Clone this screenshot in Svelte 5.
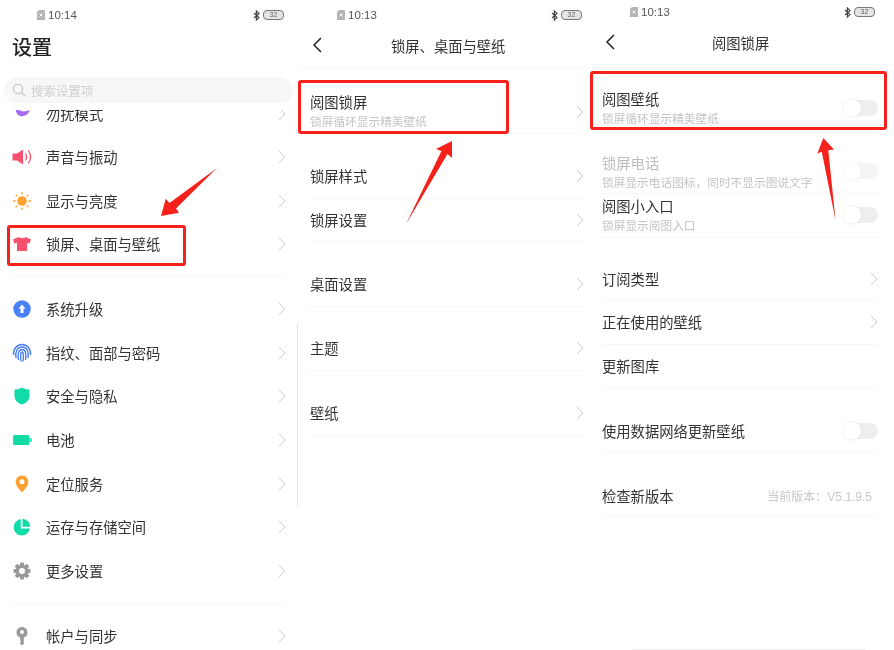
<script>
  const firstGroup = [
    { name: "声音与振动", icon: "sound" },
    { name: "显示与亮度", icon: "sun" },
    { name: "锁屏、桌面与壁纸", icon: "tee" },
  ];
  const secondGroup = [
    { name: "系统升级", icon: "up" },
    { name: "指纹、面部与密码", icon: "finger" },
    { name: "安全与隐私", icon: "shield" },
    { name: "电池", icon: "battery" },
    { name: "定位服务", icon: "pin" },
    { name: "运存与存储空间", icon: "pie" },
    { name: "更多设置", icon: "gear" },
  ];
  const gearTeeth = [0, 45, 90, 135];
</script>

{#snippet status(time)}
  <div class="status">
    <svg class="sim" width="8" height="10" viewBox="0 0 8 10">
      <path d="M2 0h6v10H0V2z" fill="#b4b4b4" />
      <path d="M2.5 3.5l3 3M5.5 3.5l-3 3" stroke="#fff" stroke-width="0.9" />
    </svg>
    <span class="time">{time}</span>
    <span class="grow"></span>
    <svg class="bt" width="7" height="11" viewBox="0 0 7 11">
      <path d="M1 3l5 4.6L3.4 10V1L6 3.4 1 8" fill="none" stroke="#444" stroke-width="1.2" />
    </svg>
    <span class="batt"><span>32</span></span>
  </div>
{/snippet}

{#snippet chevron()}
  <svg class="chev" width="8" height="14" viewBox="0 0 8 14">
    <path d="M1 1l6 6-6 6" fill="none" stroke="#cfcfcf" stroke-width="1" />
  </svg>
{/snippet}

{#snippet back()}
  <svg width="10" height="16" viewBox="0 0 10 16">
    <path d="M9 1L2 8l7 7" fill="none" stroke="#222" stroke-width="1.5" />
  </svg>
{/snippet}

{#snippet toggle()}
  <span class="toggle"><span class="knob"></span></span>
{/snippet}

{#snippet icon(kind)}
  <svg class="icon" width="20" height="20" viewBox="0 0 20 20">
    {#if kind === "moon"}
      <path d="M3 1c2 6 8 8 15 5-2 5-6 7-10 6C5 11 3 7 3 1z" fill="#a96bf0" />
    {:else if kind === "sound"}
      <path d="M.5 6.500H5l6-4v15l-6-4H.5z" fill="#f9506e" />
      <path d="M13.500 6.500c1.300 2.300 1.300 4.700 0 7M16.300 3.500c2.800 4 2.800 9 0 13" fill="none" stroke="#f9506e" stroke-width="1.300" />
    {:else if kind === "sun"}
      <circle cx="10" cy="10" r="4.800" fill="#ffa42e" />
      <path d="M10 1v2.500M10 16.500V19M1 10h2.500M16.500 10H19M3.600 3.600l1.800 1.800M14.600 14.600l1.800 1.800M3.600 16.400l1.800-1.800M14.600 5.400l1.800-1.800" stroke="#ffa42e" stroke-width="1.300" />
    {:else if kind === "tee"}
      <path d="M6.500 3c1 1.500 6 1.500 7 0l5.500 2.500-1.500 4-2.500-.8V17H5V8.700l-2.500.8L1 5.500z" fill="#f9506e" />
    {:else if kind === "up"}
      <circle cx="10" cy="10" r="8.700" fill="#4a80f5" />
      <path d="M10 5.500l3.500 4h-2V14h-3V9.500h-2z" fill="#fff" />
    {:else if kind === "finger"}
      <g fill="none" stroke="#4a80f5" stroke-width="1.400">
        <path d="M1.500 12C1 6 5 1.500 10 1.500S19 6 18.500 12" />
        <path d="M4 15c-1-6 1-11 6-11s7 5 6 11" />
        <path d="M6.500 17c-1-5-.5-10.500 3.500-10.500s4.500 5.500 3.500 10.500" />
        <path d="M9 18.500c-.5-3-1-9.500 1-9.500s1.500 6.500 1 9.500" />
      </g>
    {:else if kind === "shield"}
      <path d="M10 1.500c2.500 1.500 5 2 7.500 2V10c0 4.500-3.500 7.300-7.500 8.500C6 17.300 2.500 14.500 2.500 10V3.500c2.500 0 5-.5 7.500-2z" fill="#12dba8" />
    {:else if kind === "battery"}
      <rect x="1" y="5" width="16.500" height="10" rx="1.500" fill="#12dba8" />
      <rect x="18" y="8" width="1.500" height="4" fill="#12dba8" />
    {:else if kind === "pin"}
      <path d="M10 1.500c3.600 0 6.300 2.800 6.300 6.300 0 3.800-3.500 7.700-6.300 10.700C7.200 15.500 3.700 11.600 3.700 7.800c0-3.500 2.700-6.300 6.300-6.300z" fill="#ffa02e" />
      <circle cx="10" cy="7.800" r="2.500" fill="#fff" />
    {:else if kind === "pie"}
      <path d="M8.800 2.200v9.300h9c-.5 4-4 7-8.100 7C5 18.500 1.800 14.800 1.800 10.300c0-4.200 3-7.700 7-8.100z" fill="#12dba8" />
      <path d="M10.500 1.700c4 .2 7.400 3.400 7.700 8.100h-7.700z" fill="#12dba8" />
    {:else if kind === "gear"}
      <g fill="#999">
        {#each gearTeeth as deg}
          <rect x="8" y="1.500" width="4" height="17" rx="0.800" transform="rotate({deg} 10 10)" />
        {/each}
      </g>
      <circle cx="10" cy="10" r="6.300" fill="#999" />
      <circle cx="10" cy="10" r="3" fill="#fff" />
    {:else if kind === "key"}
      <path d="M10 1c3 0 5.500 2.400 5.500 5.400 0 2.400-1.500 4.300-3.700 5.100V18L10 19.200 8.200 18v-1.500l1-1-1-1v-3C6 10.700 4.500 8.800 4.500 6.400 4.500 3.400 7 1 10 1z" fill="#999" />
      <circle cx="10" cy="6" r="2" fill="#fff" />
    {/if}
  </svg>
{/snippet}

{#snippet menuRow(item)}
  <div class="menu-row">
    {@render icon(item.icon)}
    <span class="label">{item.name}</span>
    {@render chevron()}
  </div>
{/snippet}

<div class="page">
  <section class="phone one">
    {@render status("10:14")}
    <h1>设置</h1>
    <div class="search">
      <svg width="14" height="14" viewBox="0 0 14 14">
        <circle cx="6" cy="6" r="4.600" fill="none" stroke="#c8c8c8" stroke-width="1.300" />
        <path d="M9.500 9.500L13 13" stroke="#c8c8c8" stroke-width="1.300" />
      </svg>
      <span>搜索设置项</span>
    </div>
    <div class="scroller">
      <div class="group">
        <div class="cut">{@render menuRow({ name: "勿扰模式", icon: "moon" })}</div>
        {#each firstGroup as item}{@render menuRow(item)}{/each}
      </div>
      <div class="group">
        {#each secondGroup as item}{@render menuRow(item)}{/each}
      </div>
      {@render menuRow({ name: "帐户与同步", icon: "key" })}
    </div>
    <span class="scrollbar"></span>
    <span class="mark mark-a"></span>
    <svg class="arrow" style="left:155px;top:162px" width="70" height="60" viewBox="155 162 70 60">
      <path d="M217 168L176 208.500 179 212.700 161 216 165.700 198.700 169.500 203z" fill="#f5211a" />
    </svg>
  </section>

  <section class="phone two">
    {@render status("10:13")}
    <header class="nav">
      {@render back()}
      <span class="nav-title">锁屏、桌面与壁纸</span>
    </header>
    <div class="lines">
      <div class="line lead">
        <div class="texts"><span class="label">阅图锁屏</span><small>锁屏循环显示精美壁纸</small></div>
        {@render chevron()}
      </div>
      <div class="line gap"><span class="label">锁屏样式</span>{@render chevron()}</div>
      <div class="line"><span class="label">锁屏设置</span>{@render chevron()}</div>
      <div class="line gap"><span class="label">桌面设置</span>{@render chevron()}</div>
      <div class="line gap"><span class="label">主题</span>{@render chevron()}</div>
      <div class="line gap"><span class="label">壁纸</span>{@render chevron()}</div>
    </div>
    <span class="mark mark-b"></span>
    <svg class="arrow" style="left:400px;top:135px" width="60" height="95" viewBox="400 135 60 95">
      <path d="M406 224L441.500 151 436 149 452 141 452 158 447.500 154z" fill="#f5211a" />
    </svg>
  </section>

  <section class="phone three">
    {@render status("10:13")}
    <header class="nav">
      {@render back()}
      <span class="nav-title">阅图锁屏</span>
    </header>
    <div class="lines">
      <div class="line first-pic">
        <div class="texts"><span class="label">阅图壁纸</span><small>锁屏循环显示精美壁纸</small></div>
        {@render toggle()}
      </div>
      <div class="line call">
        <div class="texts off"><span class="label">锁屏电话</span><small>锁屏显示电话图标，同时不显示图说文字</small></div>
        <span class="dim">{@render toggle()}</span>
      </div>
      <div class="line small-entry">
        <div class="texts"><span class="label">阅图小入口</span><small>锁屏显示阅图入口</small></div>
        {@render toggle()}
      </div>
      <div class="line sub-top"><span class="label">订阅类型</span>{@render chevron()}</div>
      <div class="line"><span class="label">正在使用的壁纸</span>{@render chevron()}</div>
      <div class="line"><span class="label">更新图库</span></div>
      <div class="line gap"><span class="label">使用数据网络更新壁纸</span>{@render toggle()}</div>
      <div class="line gap">
        <span class="label">检查新版本</span>
        <span class="version">当前版本：V5.1.9.5</span>
      </div>
    </div>
    <span class="home"></span>
    <span class="mark mark-c"></span>
    <svg class="arrow" style="left:810px;top:132px" width="30" height="92" viewBox="810 132 30 92">
      <path d="M835.500 220L821.700 151.500 817.300 153.700 823.300 138 834 149.500 828.300 150.300z" fill="#f5211a" />
    </svg>
  </section>
</div>

<style>
  :global(body) {
    margin: 0;
    background: #fff;
  }

  .page {
    display: flex;
    width: 894px;
    height: 650px;
    overflow: hidden;
    font-family: "Noto Sans CJK SC", "Liberation Sans", sans-serif;
    color: #333;
    position: relative;
    filter: blur(0.35px);
  }

  .phone {
    height: 650px;
    flex: none;
    display: flex;
    flex-direction: column;
  }
  .one { width: 298px; }
  .two { width: 292px; }
  .three { width: 304px; }

  .status {
    height: 30px;
    display: flex;
    align-items: center;
    box-sizing: border-box;
    flex: none;
  }
  .one .status { padding: 0 14px 0 37px; }
  .two .status { padding: 0 8px 0 39px; }
  .three .status { height: 24px; padding: 0 19px 0 40px; }

  .time {
    font-family: "Liberation Sans", sans-serif;
    font-size: 11.5px;
    color: #555;
    margin-left: 3px;
  }
  .grow { flex: 1; }
  .batt {
    width: 19px;
    height: 8px;
    margin-left: 3px;
    border: 1px solid #777;
    border-radius: 4px;
    display: flex;
    align-items: center;
    justify-content: center;
    background: #e4e4e4;
    font: 7px/8px "Liberation Sans", sans-serif;
    color: #666;
  }

  h1 {
    margin: 0;
    height: 34px;
    padding-left: 12px;
    font-size: 20px;
    font-weight: 500;
    line-height: 34px;
    color: #222;
    flex: none;
  }

  .search {
    margin: 13px 5px 0 4px;
    height: 26px;
    flex: none;
    border-radius: 13px;
    background: #f7f7f7;
    display: flex;
    align-items: center;
    gap: 5px;
    padding-left: 8px;
    font-size: 12.5px;
    color: #cfcfcf;
  }

  .scroller {
    margin-top: 7px;
    flex: 1;
    overflow: hidden;
  }
  .cut { margin: -17.5px 0 -1px; }

  .group {
    padding-bottom: 10px;
    margin: 0 12px 10px;
    border-bottom: 1px solid #f6f6f6;
  }
  .group .menu-row { margin: 0 -12px; }

  .menu-row {
    height: 43.67px;
    display: flex;
    align-items: center;
    padding: 0 12px;
  }
  .icon { flex: none; margin-right: 14px; }
  .label { font-size: 14.3px; line-height: 20px; color: #333; }
  .chev { flex: none; margin-left: auto; }

  .nav {
    height: 30px;
    flex: none;
    display: flex;
    align-items: center;
    position: relative;
    padding-left: 14px;
  }
  .three .nav { padding-left: 15px; margin-top: 3px; }
  .nav-title {
    position: absolute;
    left: 93px;
    font-size: 14.3px;
    color: #333;
  }
  .three .nav-title { left: 122px; }

  .lines {
    border-top: 1px solid #f7f7f7;
    display: flex;
    flex-direction: column;
  }
  .two .lines { padding: 0 6px 0 12px; margin-top: 7px; }
  .three .lines { padding: 0 16px 0 12px; margin-top: 7px; }

  .line {
    height: 43.67px;
    flex: none;
    display: flex;
    align-items: center;
    border-bottom: 1px solid #f6f6f6;
    box-sizing: border-box;
  }
  .line.gap {
    height: 64.5px;
    padding-top: 20px;
  }
  .three .line.gap { padding-top: 22px; }
  .line.lead { height: 66px; padding-top: 19px; }
  .lead .chev { margin-top: 3px; }
  .line.first-pic { height: 65px; border-bottom: none; padding-top: 20px; }
  .line.call { height: 64px; padding-top: 19px; }
  .line.small-entry { height: 44px; padding-bottom: 2px; }
  .line.sub-top { height: 63px; padding-top: 20px; }

  .texts {
    display: flex;
    flex-direction: column;
    gap: 1px;
  }
  small {
    font-size: 11.7px;
    line-height: 16px;
    color: #c4c4c4;
  }
  .off .label { color: #bdbdbd; }

  .toggle {
    margin-left: auto;
    width: 35px;
    height: 16px;
    border-radius: 8px;
    background: #eee;
    display: block;
    position: relative;
    flex: none;
  }
  .knob {
    position: absolute;
    left: 0;
    top: -1px;
    width: 18px;
    height: 18px;
    border-radius: 50%;
    background: #fff;
    box-shadow: 0 0 2px #ddd;
  }
  .dim {
    margin-left: auto;
    opacity: 0.6;
  }

  .version {
    margin-left: auto;
    margin-right: 6px;
    font-family: "Liberation Sans", "Noto Sans CJK SC", sans-serif;
    font-size: 12px;
    color: #c8c8c8;
  }

  .scrollbar {
    position: absolute;
    left: 297px;
    top: 323px;
    width: 1px;
    height: 185px;
    background: #e6e6e6;
  }
  .mark {
    position: absolute;
    border: 3px solid #f5211a;
    border-radius: 3px;
    box-sizing: border-box;
  }
  .mark-a { left: 7px; top: 225px; width: 179px; height: 41px; }
  .mark-b { left: 298px; top: 80px; width: 211px; height: 54px; }
  .mark-c { left: 590px; top: 71px; width: 297px; height: 59px; }

  .arrow { position: absolute; }

  .home {
    position: absolute;
    left: 632px;
    top: 649px;
    width: 233px;
    height: 1px;
    background: #f0f0f0;
  }
</style>
